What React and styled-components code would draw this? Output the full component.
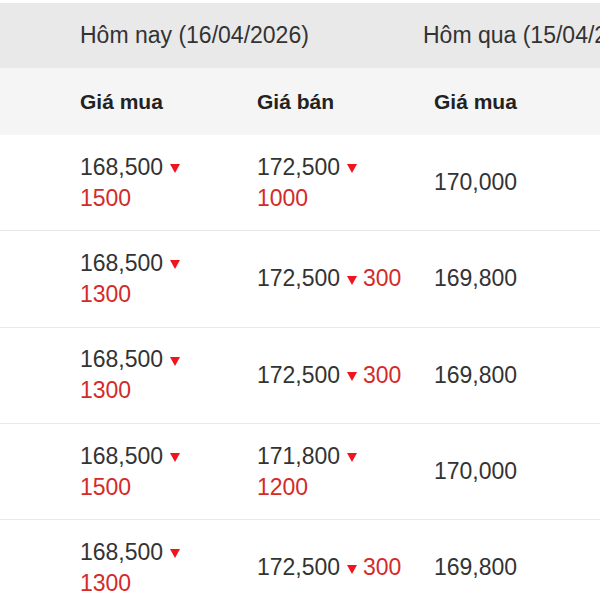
import React from "react";
import styled, { createGlobalStyle } from "styled-components";

const Global = createGlobalStyle`
  html, body { margin: 0; padding: 0; background: #fff; }
  body { font-family: "Liberation Sans", Arial, sans-serif; }
`;

const COLS = "66px 177px 177px 177px 177px";

const Table = styled.div`
  width: 600px;
  overflow: hidden;
  padding-top: 3px;
  color: #333;
  font-family: "Liberation Sans", Arial, sans-serif;
`;

const GroupHeader = styled.div`
  display: grid;
  grid-template-columns: ${COLS};
  width: 774px;
  height: 65px;
  align-items: center;
  background: #e9e9e9;
  font-size: 23px;
  white-space: nowrap;
`;

const GroupCell = styled.div`
  grid-column: ${(p) => p.$col};
  padding-left: ${(p) => p.$pad}px;
`;

const SubHeader = styled.div`
  display: grid;
  grid-template-columns: ${COLS};
  width: 774px;
  height: 67px;
  align-items: center;
  background: #f5f5f5;
  font-size: 21px;
  font-weight: bold;
  color: #222;
`;

const HeadCell = styled.div`
  padding: 0 14px;
  white-space: nowrap;
`;

const Row = styled.div`
  display: grid;
  grid-template-columns: ${COLS};
  width: 774px;
  height: 95.3px;
  align-items: center;
  border-bottom: 1px solid #e8e8e8;
  font-size: 23px;
  line-height: 31px;
`;

const Cell = styled.div`
  padding: 0 14px;
`;

const Down = styled.span`
  display: inline-block;
  width: 0;
  height: 0;
  border-left: 5.5px solid transparent;
  border-right: 5.5px solid transparent;
  border-top: 9px solid #f0141e;
  vertical-align: middle;
`;

const Change = styled.span`
  color: #d42a2a;
`;

const Price = ({ value, change }) => (
  <Cell>
    {value}
    {change ? (
      <>
        {" "}
        <Down /> <Change>{change}</Change>
      </>
    ) : null}
  </Cell>
);

const rows = [
  { buy: "168,500", buyCh: "1500", sell: "172,500", sellCh: "1000", yBuy: "170,000", ySell: "173,500" },
  { buy: "168,500", buyCh: "1300", sell: "172,500", sellCh: "300", yBuy: "169,800", ySell: "172,800" },
  { buy: "168,500", buyCh: "1300", sell: "172,500", sellCh: "300", yBuy: "169,800", ySell: "172,800" },
  { buy: "168,500", buyCh: "1500", sell: "171,800", sellCh: "1200", yBuy: "170,000", ySell: "173,000" },
  { buy: "168,500", buyCh: "1300", sell: "172,500", sellCh: "300", yBuy: "169,800", ySell: "172,800" },
];

export default function App() {
  return (
    <>
      <Global />
      <Table>
        <GroupHeader>
          <GroupCell $col="2 / span 2" $pad={14}>Hôm nay (16/04/2026)</GroupCell>
          <GroupCell $col="4 / span 2" $pad={3}>Hôm qua (15/04/2026)</GroupCell>
        </GroupHeader>
        <SubHeader>
          <HeadCell />
          <HeadCell>Giá mua</HeadCell>
          <HeadCell>Giá bán</HeadCell>
          <HeadCell>Giá mua</HeadCell>
          <HeadCell>Giá bán</HeadCell>
        </SubHeader>
        {rows.map((r, i) => (
          <Row key={i}>
            <Cell />
            <Price value={r.buy} change={r.buyCh} />
            <Price value={r.sell} change={r.sellCh} />
            <Price value={r.yBuy} />
            <Price value={r.ySell} />
          </Row>
        ))}
      </Table>
    </>
  );
}
